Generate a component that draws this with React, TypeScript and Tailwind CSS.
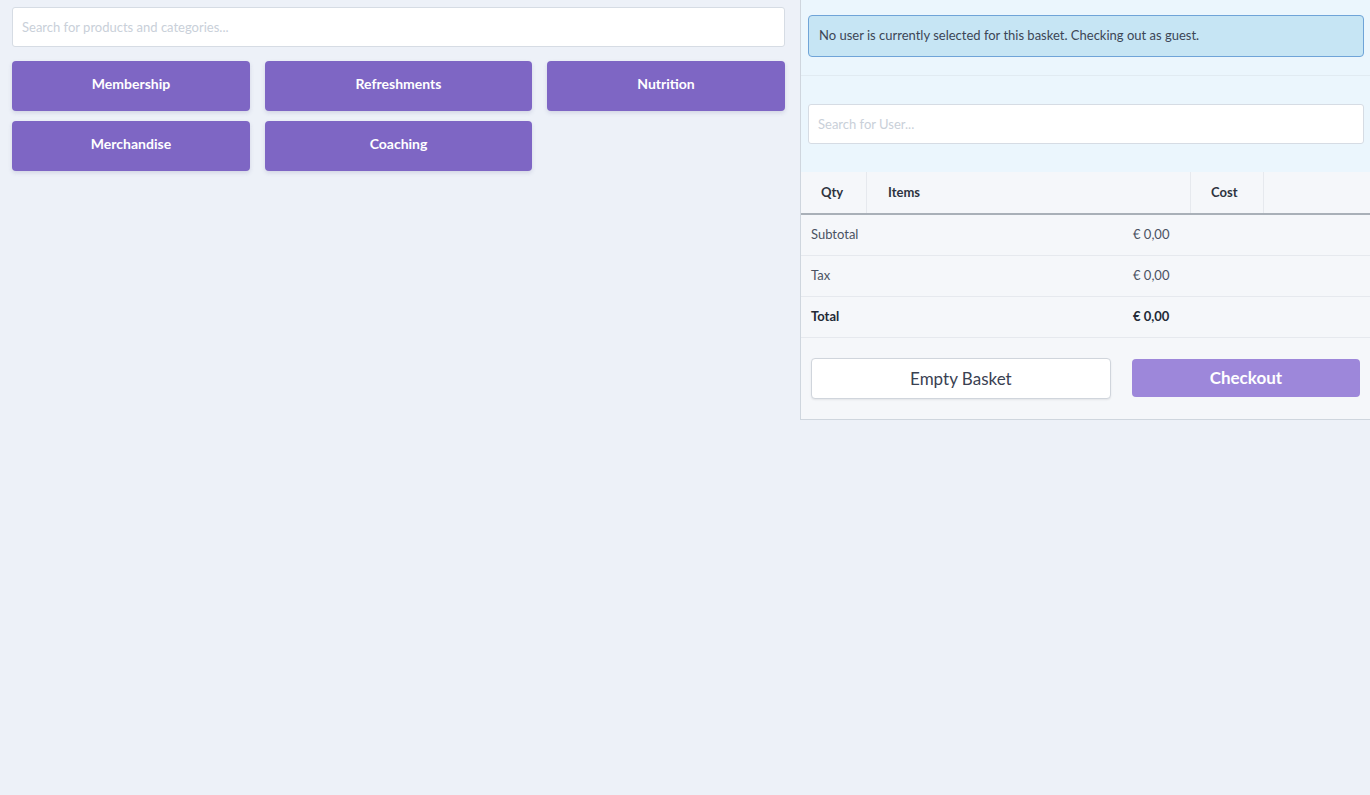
const categories = [
  { name: "Membership", col: "col-start-1" },
  { name: "Refreshments", col: "col-start-2" },
  { name: "Nutrition", col: "col-start-3" },
  { name: "Merchandise", col: "col-start-1" },
  { name: "Coaching", col: "col-start-2" },
];

const totals = [
  { label: "Subtotal", value: "€ 0,00", bold: false },
  { label: "Tax", value: "€ 0,00", bold: false },
  { label: "Total", value: "€ 0,00", bold: true },
];

const App = () => {
  return (
    <div className="flex min-h-[795px] bg-[#edf1f8] font-['Lato',sans-serif] text-[#2e3440]">
      <main className="w-[800px] shrink-0 px-3 pt-[7px]">
        <input
          className="h-10 w-[773px] rounded-[3px] border border-[#d6dce4] bg-white px-[9px] text-[13px] placeholder:text-[#c9d0d9] outline-none"
          placeholder="Search for products and categories..."
        />
        <div className="mt-[14px] grid grid-cols-[238px_267px_238px] gap-x-[15px] gap-y-[10px]">
          {categories.map((c) => (
            <button
              key={c.name}
              className={`${c.col} h-[50px] rounded-[4px] bg-[#7e66c4] pb-[5px] text-[14px] font-bold text-white shadow-[0_2px_4px_rgba(60,60,120,0.15)]`}
            >
              {c.name}
            </button>
          ))}
        </div>
      </main>

      <aside className="flex h-[420px] w-[570px] flex-col border-l border-b border-[#cfd6de] bg-[#f5f7fa]">
        <div className="bg-[#ebf6fd] pb-[18px] pl-[7px] pr-[6px] pt-[15px]">
          <div className="flex h-[42px] items-center rounded-[4px] border border-[#6fa4d8] bg-[#c6e5f4] px-[10px] text-[13px] text-[#3c4656]">
            No user is currently selected for this basket. Checking out as guest.
          </div>
        </div>
        <div className="border-t border-[#e1ebf2] bg-[#ebf6fd] pb-[28px] pl-[7px] pr-[6px] pt-[28px]">
          <input
            className="h-10 w-full rounded-[3px] border border-[#d6dce4] bg-white px-[9px] text-[13px] placeholder:text-[#c9d0d9] outline-none"
            placeholder="Search for User..."
          />
        </div>
        <div className="flex h-[43px] items-center border-b-2 border-[#a9b0b8] text-[13px] font-bold">
          <div className="flex h-full w-[66px] items-center border-r border-[#e6e9ee] pl-[20px]">Qty</div>
          <div className="flex h-full w-[324px] items-center border-r border-[#e6e9ee] pl-[21px]">Items</div>
          <div className="flex h-full w-[73px] items-center border-r border-[#e6e9ee] pl-[20px]">Cost</div>
          <div className="flex-1" />
        </div>
        {totals.map((t) => (
          <div
            key={t.label}
            className={`flex h-[41px] items-center border-b border-[#e6e9ee] text-[13px] ${t.bold ? "font-bold text-[#232a36]" : "text-[#4a5262]"}`}
          >
            <span className="w-[332px] pl-[10px]">{t.label}</span>
            <span>{t.value}</span>
          </div>
        ))}
        <div className="flex gap-[21px] px-[10px] pt-[20px]">
          <button className="h-[41px] w-[302px] rounded-[4px] border border-[#d0d5dc] bg-white text-[17px] text-[#3a4152] shadow-[0_1px_2px_rgba(0,0,0,0.08)]">
            Empty Basket
          </button>
          <button className="mt-[1px] h-[38px] w-[230px] rounded-[4px] bg-[#9d87da] text-[17px] font-bold text-white">
            Checkout
          </button>
        </div>
      </aside>
    </div>
  );
};

export default App;
